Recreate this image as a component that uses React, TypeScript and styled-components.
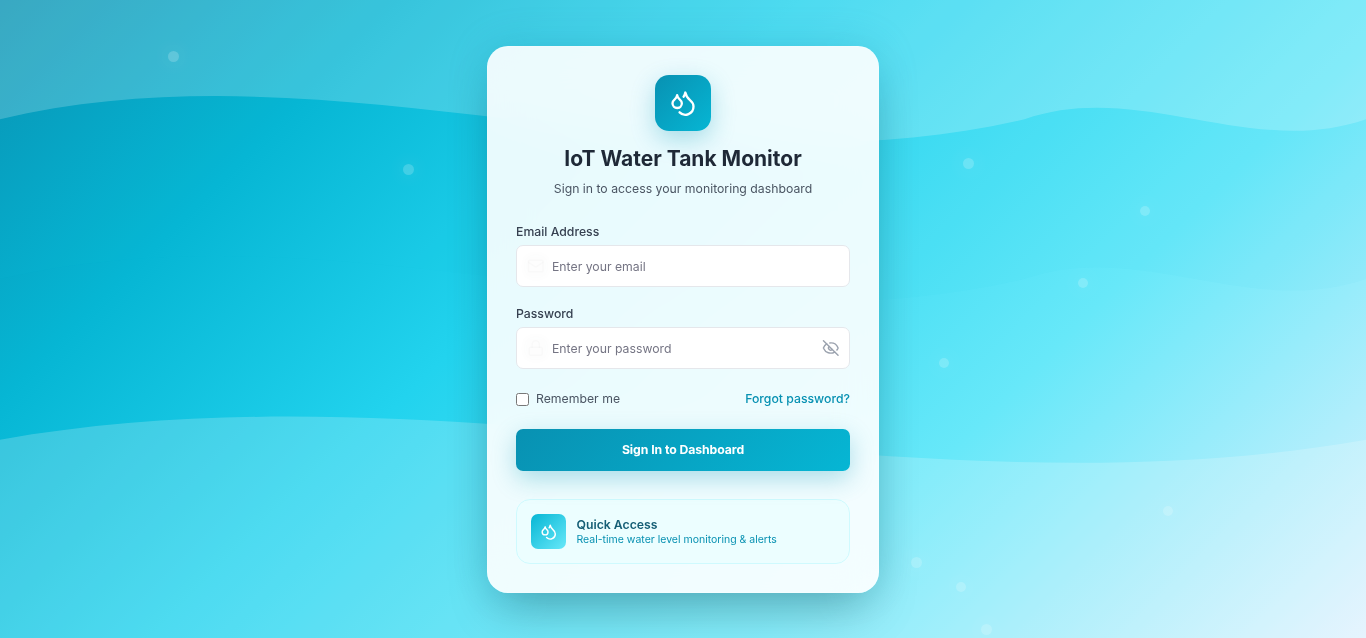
import React from 'react';
import styled, { createGlobalStyle } from 'styled-components';
import { Droplets, EyeOff, Lock, Mail } from 'lucide-react';

const GlobalStyle = createGlobalStyle`
  *, *::before, *::after { box-sizing: border-box; }
  html { font-size: 14px; }
  body {
    margin: 0;
    font-family: Inter, sans-serif;
    line-height: 1.5;
    overflow: hidden;
  }
  h1, p { margin: 0; }
  button, input { font: inherit; }
`;

const Page = styled.main`
  position: relative;
  display: flex;
  align-items: center;
  justify-content: center;
  min-height: 100vh;
  overflow: hidden;
  background: linear-gradient(135deg, #0891b2 0%, #06b6d4 20%, #22d3ee 40%, #67e8f9 70%, #e0f2fe 100%);
`;

const Waves = styled.svg`
  position: absolute;
  inset: 0;
  width: 100%;
  height: 100%;
`;

const Bubble = styled.span<{ $x: number; $y: number; $size: number }>`
  position: absolute;
  left: ${(p) => p.$x - p.$size / 2}px;
  top: ${(p) => p.$y - p.$size / 2}px;
  width: ${(p) => p.$size}px;
  height: ${(p) => p.$size}px;
  border-radius: 50%;
  background: rgba(255, 255, 255, 0.2);
  box-shadow: 0 0 20px rgba(255, 255, 255, 0.2);
`;

const Card = styled.section`
  position: relative;
  width: 28rem;
  padding: 2rem;
  border: 1px solid rgba(255, 255, 255, 0.2);
  border-radius: 1.5rem;
  background: rgba(255, 255, 255, 0.9);
  backdrop-filter: blur(20px);
  box-shadow: 0 25px 50px -12px rgba(0, 0, 0, 0.25), 0 0 40px rgba(8, 145, 178, 0.2);
  transform: scale(0.99999);
`;

const Header = styled.header`
  display: flex;
  flex-direction: column;
  align-items: center;
  margin-bottom: 25px;
`;

const Logo = styled.div`
  display: grid;
  place-items: center;
  width: 4rem;
  height: 4rem;
  margin-bottom: 1rem;
  border-radius: 1rem;
  color: #fff;
  background: linear-gradient(135deg, #0891b2, #06b6d4);
  box-shadow: 0 8px 25px rgba(8, 145, 178, 0.3);
`;

const Title = styled.h1`
  margin-bottom: 0.5rem;
  font-size: 1.5rem;
  line-height: 2rem;
  font-weight: 700;
  color: #1f2937;
`;

const Subtitle = styled.p`
  font-size: 0.875rem;
  line-height: 1.25rem;
  color: #4b5563;
`;

const Form = styled.form`
  display: flex;
  flex-direction: column;
  gap: 1.5rem;
`;

const Fields = styled.div`
  display: flex;
  flex-direction: column;
  gap: 1.25rem;
`;

const Field = styled.div`
  display: flex;
  flex-direction: column;
  gap: 5px;
`;

const Label = styled.label`
  font-size: 0.875rem;
  line-height: 1.25rem;
  font-weight: 500;
  color: #374151;
`;

const Control = styled.div`
  position: relative;
`;

const LeadIcon = styled.span`
  position: absolute;
  top: 50%;
  left: 11px;
  display: flex;
  transform: translateY(-50%);
  color: rgba(75, 85, 99, 0.025);
  border-radius: 4px;
  background: rgba(75, 85, 99, 0.012);
  box-shadow: 0 0 8px 2px rgba(75, 85, 99, 0.02);
  pointer-events: none;
`;

const Input = styled.input`
  display: block;
  width: 100%;
  height: 3rem;
  padding: 0 2.5rem;
  border: 1px solid #e5e7eb;
  border-radius: 0.5rem;
  outline: none;
  font-size: 0.875rem;
  background: #fff;
  &::placeholder { color: #757584; opacity: 1; }
`;

const Reveal = styled.button`
  position: absolute;
  top: 50%;
  right: 10.5px;
  display: flex;
  padding: 0;
  border: 0;
  background: none;
  transform: translateY(-50%);
  color: #9ca3af;
`;

const Options = styled.div`
  display: flex;
  align-items: center;
  justify-content: space-between;
  margin-bottom: 0.5px;
  font-size: 0.875rem;
  line-height: 1.25rem;
`;

const Remember = styled.label`
  display: flex;
  align-items: center;
  gap: 7px;
  color: #4b5563;
`;

const Checkbox = styled.input`
  width: 13px;
  height: 13px;
  margin: 1px 0 0;
`;

const Forgot = styled.a`
  font-weight: 500;
  color: #0891b2;
  text-decoration: none;
`;

const Submit = styled.button`
  height: 3rem;
  border: 0;
  border-radius: 0.5rem;
  font-size: 0.875rem;
  font-weight: 700;
  letter-spacing: -0.006em;
  color: #fff;
  background: linear-gradient(135deg, #0891b2, #06b6d4);
  box-shadow: 0 8px 25px rgba(8, 145, 178, 0.3);
`;

const QuickAccess = styled.aside`
  display: flex;
  align-items: center;
  gap: 0.75rem;
  margin-top: 2rem;
  padding: 1rem;
  border: 1px solid #cffafe;
  border-radius: 1rem;
  background: #ecfeff;
`;

const QuickIcon = styled.div`
  display: grid;
  place-items: center;
  width: 2.5rem;
  height: 2.5rem;
  border-radius: 0.5rem;
  color: #fff;
  background: linear-gradient(135deg, #06b6d4, #67e8f9);
`;

const QuickTitle = styled.p`
  font-size: 0.875rem;
  line-height: 1.25rem;
  font-weight: 600;
  color: #155e75;
`;

const QuickText = styled.p`
  font-size: 0.75rem;
  line-height: 1rem;
  color: #0891b2;
`;

const bubbles = [
  [173.5, 56.5, 11], [408.5, 169.5, 11], [968.5, 163.5, 11], [1145, 210.5, 10],
  [1083, 283, 10], [944, 363, 10], [1168, 510.5, 10], [916.5, 562, 11],
  [961, 586.5, 10], [986.5, 629, 11],
];

export default function App() {
  return (
    <>
      <GlobalStyle />
      <Page>
        <Waves viewBox="0 0 1366 638" preserveAspectRatio="none" aria-hidden="true">
          <path d="M0 0V279C341.5 199 683 359 1024.5 279C1138 239 1252 319 1366 279V0Z" fill="#22d3ee" fillOpacity="0.04" />
          <path d="M0 0V119.2C341.5 39.2 683 199.2 1024.5 119.2C1138 79.2 1252 159.2 1366 119.2V0Z" fill="#fff" fillOpacity="0.2" />
          <path d="M0 439.7C455 359.7 911 519.7 1366 439.7V638H0Z" fill="#fff" fillOpacity="0.2" />
        </Waves>
        {bubbles.map(([x, y, size]) => (
          <Bubble key={`${x}-${y}`} $x={x} $y={y} $size={size} />
        ))}
        <Card>
          <Header>
            <Logo><Droplets size={28} /></Logo>
            <Title>IoT Water Tank Monitor</Title>
            <Subtitle>Sign in to access your monitoring dashboard</Subtitle>
          </Header>
          <Form onSubmit={(e) => e.preventDefault()}>
            <Fields>
              <Field>
                <Label htmlFor="email">Email Address</Label>
                <Control>
                  <Input id="email" type="email" placeholder="Enter your email" />
                  <LeadIcon><Mail size={17.5} /></LeadIcon>
                </Control>
              </Field>
              <Field>
                <Label htmlFor="password">Password</Label>
                <Control>
                  <Input id="password" type="password" placeholder="Enter your password" />
                  <LeadIcon><Lock size={17.5} /></LeadIcon>
                  <Reveal type="button" aria-label="Show password"><EyeOff size={17.5} /></Reveal>
                </Control>
              </Field>
            </Fields>
            <Options>
              <Remember><Checkbox type="checkbox" />Remember me</Remember>
              <Forgot href="#">Forgot password?</Forgot>
            </Options>
            <Submit type="submit">Sign In to Dashboard</Submit>
          </Form>
          <QuickAccess>
            <QuickIcon><Droplets size={17.5} /></QuickIcon>
            <div>
              <QuickTitle>Quick Access</QuickTitle>
              <QuickText>Real-time water level monitoring &amp; alerts</QuickText>
            </div>
          </QuickAccess>
        </Card>
      </Page>
    </>
  );
}
